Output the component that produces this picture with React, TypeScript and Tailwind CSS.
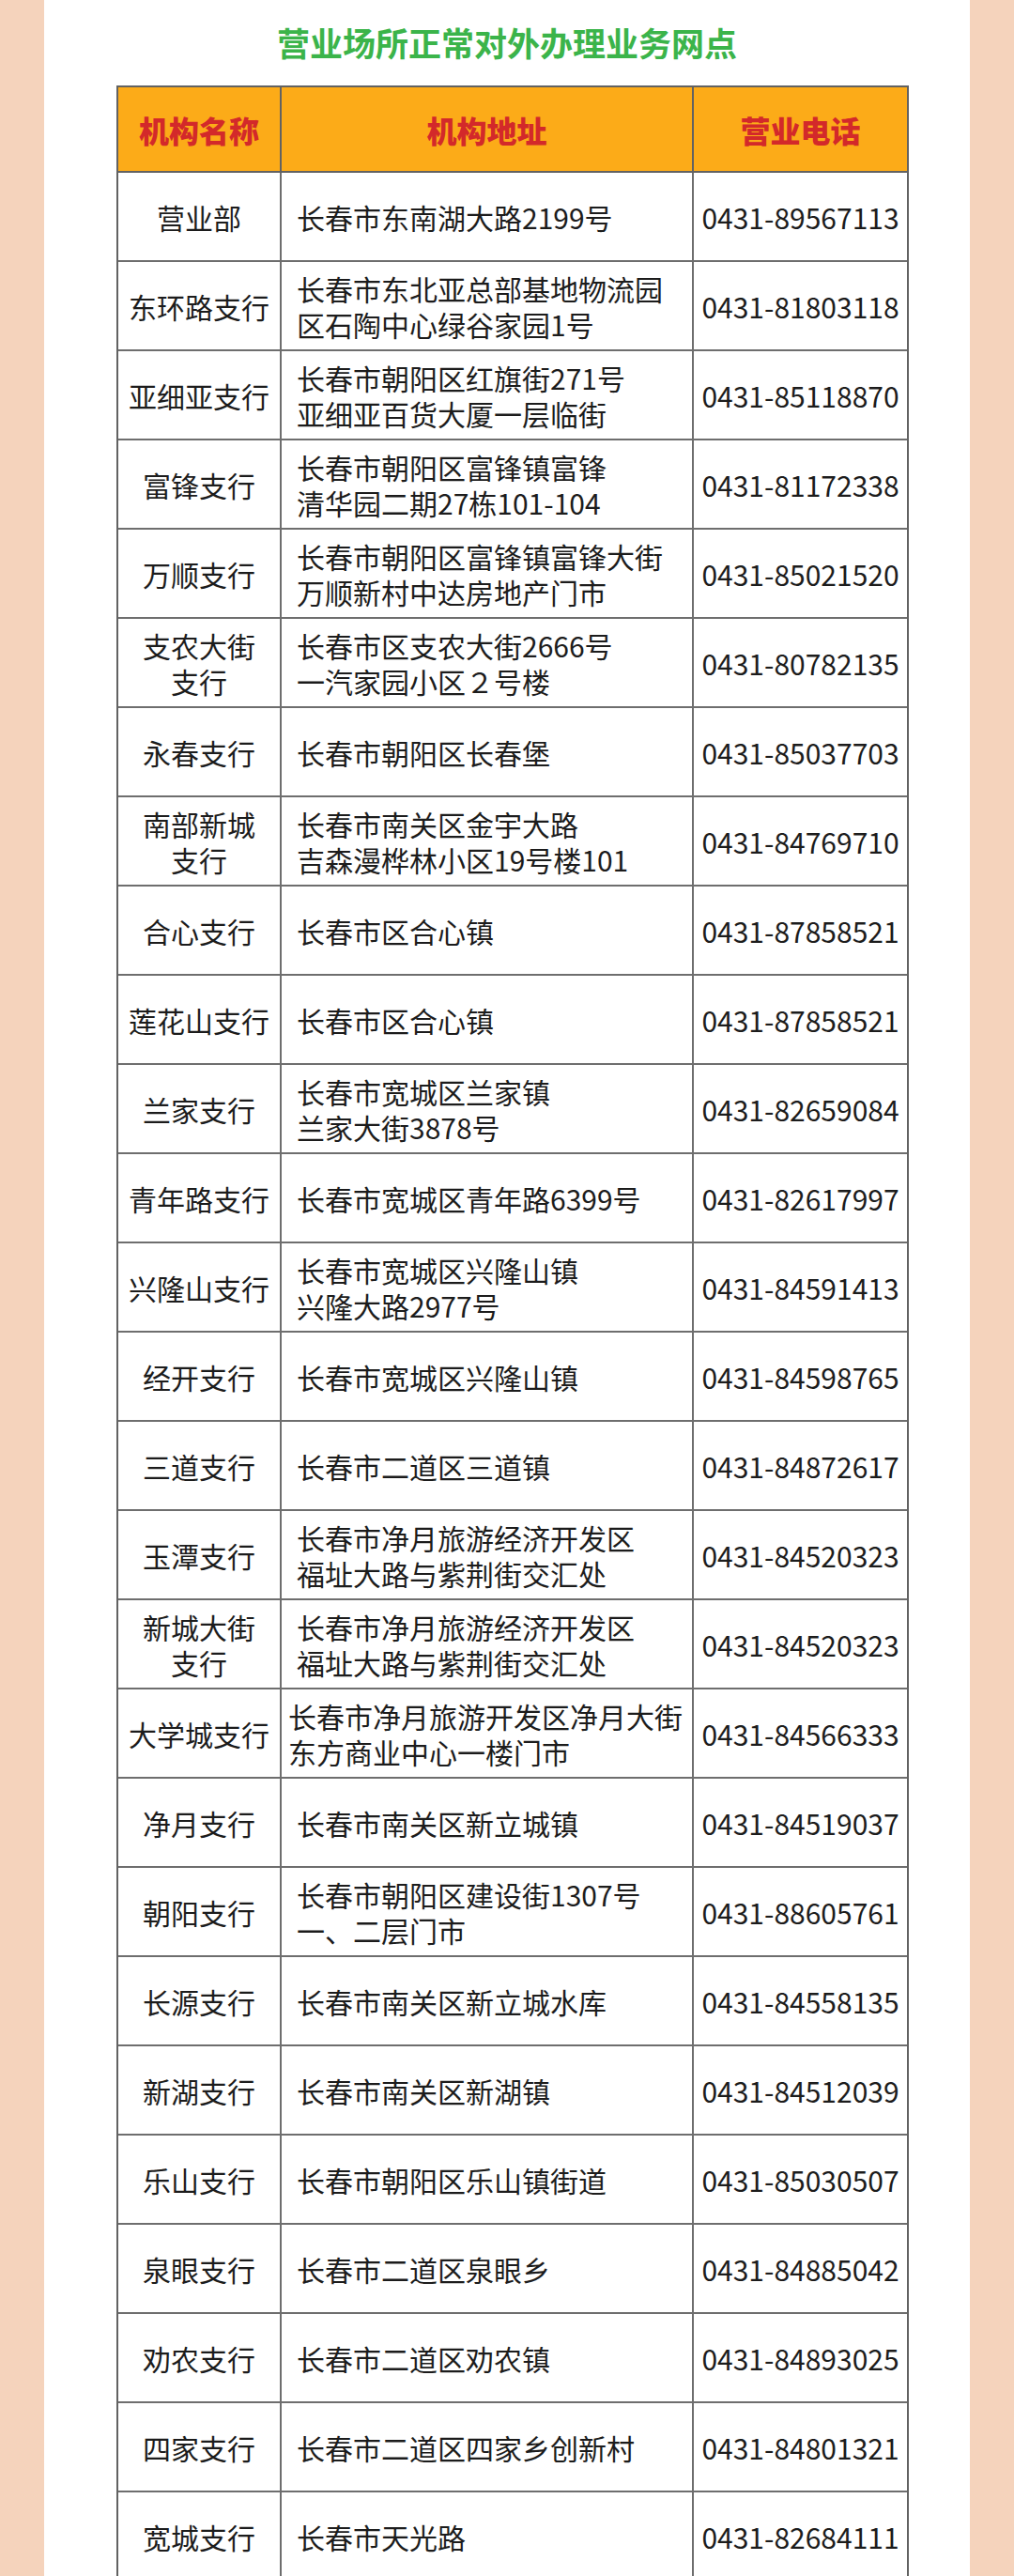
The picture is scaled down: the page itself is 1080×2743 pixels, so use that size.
import { Fragment } from "react";

type Branch = {
  name: string[];
  addr: string[];
  tel: string;
  tight?: boolean;
};

const branches: Branch[] = [
  { name: ["营业部"], addr: ["长春市东南湖大路2199号"], tel: "0431-89567113" },
  { name: ["东环路支行"], addr: ["长春市东北亚总部基地物流园", "区石陶中心绿谷家园1号"], tel: "0431-81803118" },
  { name: ["亚细亚支行"], addr: ["长春市朝阳区红旗街271号", "亚细亚百货大厦一层临街"], tel: "0431-85118870" },
  { name: ["富锋支行"], addr: ["长春市朝阳区富锋镇富锋", "清华园二期27栋101-104"], tel: "0431-81172338" },
  { name: ["万顺支行"], addr: ["长春市朝阳区富锋镇富锋大街", "万顺新村中达房地产门市"], tel: "0431-85021520" },
  { name: ["支农大街", "支行"], addr: ["长春市区支农大街2666号", "一汽家园小区２号楼"], tel: "0431-80782135" },
  { name: ["永春支行"], addr: ["长春市朝阳区长春堡"], tel: "0431-85037703" },
  { name: ["南部新城", "支行"], addr: ["长春市南关区金宇大路", "吉森漫桦林小区19号楼101"], tel: "0431-84769710" },
  { name: ["合心支行"], addr: ["长春市区合心镇"], tel: "0431-87858521" },
  { name: ["莲花山支行"], addr: ["长春市区合心镇"], tel: "0431-87858521" },
  { name: ["兰家支行"], addr: ["长春市宽城区兰家镇", "兰家大街3878号"], tel: "0431-82659084" },
  { name: ["青年路支行"], addr: ["长春市宽城区青年路6399号"], tel: "0431-82617997" },
  { name: ["兴隆山支行"], addr: ["长春市宽城区兴隆山镇", "兴隆大路2977号"], tel: "0431-84591413" },
  { name: ["经开支行"], addr: ["长春市宽城区兴隆山镇"], tel: "0431-84598765" },
  { name: ["三道支行"], addr: ["长春市二道区三道镇"], tel: "0431-84872617" },
  { name: ["玉潭支行"], addr: ["长春市净月旅游经济开发区", "福址大路与紫荆街交汇处"], tel: "0431-84520323" },
  { name: ["新城大街", "支行"], addr: ["长春市净月旅游经济开发区", "福址大路与紫荆街交汇处"], tel: "0431-84520323" },
  { name: ["大学城支行"], addr: ["长春市净月旅游开发区净月大街", "东方商业中心一楼门市"], tel: "0431-84566333", tight: true },
  { name: ["净月支行"], addr: ["长春市南关区新立城镇"], tel: "0431-84519037" },
  { name: ["朝阳支行"], addr: ["长春市朝阳区建设街1307号", "一、二层门市"], tel: "0431-88605761" },
  { name: ["长源支行"], addr: ["长春市南关区新立城水库"], tel: "0431-84558135" },
  { name: ["新湖支行"], addr: ["长春市南关区新湖镇"], tel: "0431-84512039" },
  { name: ["乐山支行"], addr: ["长春市朝阳区乐山镇街道"], tel: "0431-85030507" },
  { name: ["泉眼支行"], addr: ["长春市二道区泉眼乡"], tel: "0431-84885042" },
  { name: ["劝农支行"], addr: ["长春市二道区劝农镇"], tel: "0431-84893025" },
  { name: ["四家支行"], addr: ["长春市二道区四家乡创新村"], tel: "0431-84801321" },
  { name: ["宽城支行"], addr: ["长春市天光路"], tel: "0431-82684111" },
];

// 改行つきテキスト
const Lines = ({ lines }: { lines: string[] }) => (
  <p className="whitespace-nowrap">
    {lines.map((l, j) => (
      <Fragment key={j}>
        {j > 0 && <br />}
        {l}
      </Fragment>
    ))}
  </p>
);

export default function App() {
  return (
    <div className="flex h-[2743px] w-[1080px] overflow-hidden bg-[#f5d3bc] font-['Noto_Sans_CJK_SC','Noto_Sans',sans-serif] text-[#1c1c1c]">
      <div className="ml-[47px] w-[986px] shrink-0 bg-white">
        {/* 标题 */}
        <h1 className="flex h-[91px] items-center justify-center pb-[2px] text-[35px] font-bold leading-none text-[#3bb44a]">
          营业场所正常对外办理业务网点
        </h1>

        {/* 表格 */}
        <div className="ml-[77px] w-[844px] border-x-2 border-t-2 border-[#626262]">
          <div className="flex h-[91px] border-b-2 border-[#626262] bg-[#fcab18] text-[32px] font-black leading-none text-[#d3292a]">
            <div className="flex w-[174px] shrink-0 items-center justify-center border-r-2 border-[#626262]">机构名称</div>
            <div className="flex w-[439px] shrink-0 items-center justify-center border-r-2 border-[#626262]">机构地址</div>
            <div className="flex flex-1 items-center justify-center">营业电话</div>
          </div>

          {branches.map((b, i) => (
            <div key={i} className="flex h-[95px] border-b-2 border-[#6e6e6e] text-[30px] leading-[38px]">
              <div className="flex w-[174px] shrink-0 items-center justify-center border-r-2 border-[#6e6e6e] text-center">
                <Lines lines={b.name} />
              </div>
              <div
                className={`flex w-[439px] shrink-0 items-center border-r-2 border-[#6e6e6e] ${
                  b.tight ? "pl-[7px]" : "pl-[16px]"
                }`}
              >
                <Lines lines={b.addr} />
              </div>
              <div className="flex flex-1 items-center justify-center whitespace-nowrap">{b.tel}</div>
            </div>
          ))}
        </div>
      </div>
    </div>
  );
}
